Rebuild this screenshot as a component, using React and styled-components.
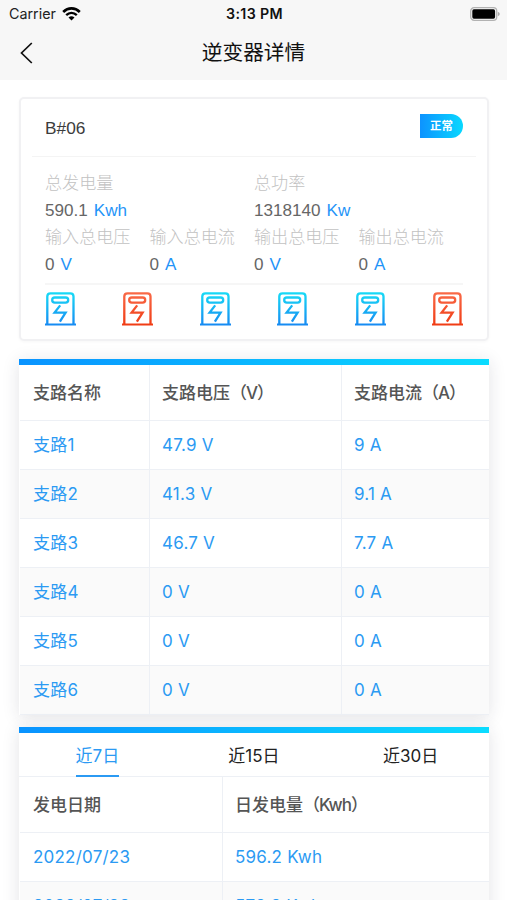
import React from "react";
import styled, { createGlobalStyle } from "styled-components";

const Global = createGlobalStyle`
  * { box-sizing: border-box; }
  body {
    margin: 0;
    background: #fff;
    font-family: Inter, "Noto Sans CJK SC", sans-serif;
    color: #111;
    overflow: hidden;
  }
`;

const Screen = styled.main`
  width: 507px;
  height: 900px;
  overflow: hidden;
  background: #fff;
`;

const Header = styled.header`
  height: 80px;
  background: #f7f7f7;
`;

const StatusBar = styled.div`
  height: 27px;
  padding: 0 7px 0 9px;
  display: grid;
  grid-template-columns: 1fr auto 1fr;
  align-items: center;
`;

const Carrier = styled.div`
  display: flex;
  align-items: center;
  gap: 6px;
  font-size: 14.3px;
  color: #222;
`;

const Clock = styled.div`
  font-size: 14.2px;
  font-weight: 600;
  letter-spacing: 0.35px;
`;

const BatterySlot = styled.div`
  display: flex;
  justify-content: flex-end;
`;

const NavBar = styled.div`
  height: 53px;
  padding: 0 20px 2px;
  display: grid;
  grid-template-columns: 1fr auto 1fr;
  align-items: center;
`;

const Title = styled.h1`
  margin: 0;
  font-size: 20.7px;
  line-height: 30px;
  font-weight: 400;
`;

const Content = styled.div`
  padding: 17px 17px 0 19px;
`;

const SummaryCard = styled.section`
  width: 470px;
  height: 244px;
  padding: 0 11px;
  border: 2px solid #f1f1f3;
  border-radius: 5px;
  background: #fff;
  box-shadow: 0 1px 3px rgba(40, 40, 60, 0.04);
  font-family: "Liberation Sans", "Noto Sans CJK SC", sans-serif;
`;

const SummaryHead = styled.div`
  height: 58px;
  padding: 2px 13px 0;
  display: flex;
  align-items: center;
  justify-content: space-between;
  border-bottom: 1px solid #f4f4f4;
  font-size: 17.3px;
  color: #3c3c3c;
`;

const Badge = styled.span`
  width: 43px;
  height: 24px;
  margin-bottom: 5px;
  padding-left: 10px;
  border-radius: 0 12px 12px 0;
  background: linear-gradient(90deg, #0d93ff, #08d8ff);
  color: #fff;
  font-size: 11.4px;
  font-weight: 700;
  line-height: 24px;
`;

const Metrics = styled.div`
  margin: 0 13px;
  padding-top: 13px;
  height: 128px;
  border-bottom: 2px solid #f6f6f6;
`;

const MetricRow = styled.div`
  display: grid;
  grid-template-columns: repeat(${(p) => p.$columns}, 1fr);
  height: 54px;
`;

const Metric = styled.div`
  font-size: 17.1px;
  line-height: 27px;
  color: #666;
  white-space: nowrap;
`;

const MetricLabel = styled.div`
  height: 27px;
  color: #c2c2c2;
  font-weight: 300;
`;

const Unit = styled.span`
  margin-left: 6px;
  color: #1f94f8;
`;

const IconRow = styled.div`
  margin: 7px 13px 0;
  display: flex;
  justify-content: space-between;
`;

const Panel = styled.section`
  width: 470px;
  margin-top: ${(p) => p.$top}px;
  background: #fff;
  box-shadow: 0 2px 16px rgba(40, 40, 60, 0.13);
`;

const Accent = styled.div`
  height: 6px;
  background: linear-gradient(90deg, #0993ff, #0bdcff);
`;

const Row = styled.div`
  display: grid;
  grid-template-columns: ${(p) => p.$columns};
  height: ${(p) => (p.$head ? 56 : 49)}px;
  line-height: ${(p) => (p.$head ? 57 : 48)}px;
  margin-left: 1px;
  background: ${(p) => (p.$striped ? "#fafafa" : "#fff")};
  border-bottom: 1px solid #edf0f5;
  color: ${(p) => (p.$head ? "#555" : "#2b9af3")};
  font-weight: ${(p) => (p.$head ? 500 : 400)};
  letter-spacing: ${(p) => (p.$head ? 0 : 0.22)}px;
`;

const Cell = styled.div`
  height: 100%;
  min-height: 0;
  padding-left: 13px;
  font-size: 17px;
  white-space: pre;
  & + & {
    padding-left: 12px;
    border-left: 1px solid #edf0f5;
  }
`;

const HeadUnit = styled.span`
  letter-spacing: -1px;
`;

const Tabs = styled.div`
  height: 44px;
  border-bottom: 1px solid #edf0f5;
  display: grid;
  grid-template-columns: repeat(3, 1fr);
  justify-items: center;
`;

const Tab = styled.button`
  appearance: none;
  height: 44px;
  padding: 3px 0 0;
  border: 0;
  border-bottom: 2px solid ${(p) => (p.$active ? "#2b9af3" : "transparent")};
  background: none;
  color: ${(p) => (p.$active ? "#2b9af3" : "#222")};
  font: 400 17px/41px Inter, "Noto Sans CJK SC", sans-serif;
`;

function Wifi() {
  return (
    <svg width="19" height="14" viewBox="0 0 19 14" fill="none" stroke="#000">
      <path d="M1.2 5C6 .2 13 .2 17.8 5" strokeWidth="2.6" />
      <path d="M4.2 8.1c3.1-2.9 7.5-2.9 10.6 0" strokeWidth="2.4" />
      <path d="M9.5 13.6 6.5 10.5q3-2.3 6 0Z" fill="#000" stroke="none" />
    </svg>
  );
}

function Battery() {
  return (
    <svg width="30" height="14" viewBox="0 0 30 14">
      <rect x="0.7" y="0.7" width="26" height="12.6" rx="3.4" fill="#f7f7f7" stroke="#b2b2b2" strokeWidth="1.3" />
      <rect x="2.3" y="2.3" width="22.8" height="9.4" rx="1.6" fill="#000" />
      <path d="M27.8 4.7q2 .9 2 2.3t-2 2.3Z" fill="#aaa" />
    </svg>
  );
}

function Back() {
  return (
    <svg width="13" height="22" viewBox="0 0 13 22" fill="none" stroke="#111" strokeWidth="1.7">
      <path d="M11.8 1 1.5 11l10.3 10" />
    </svg>
  );
}

function Inverter({ id, alert }) {
  const paint = `url(#${id})`;
  return (
    <svg width="31" height="34" viewBox="0 0 31 34" fill="none" stroke={paint} strokeWidth="2.3">
      <defs>
        <linearGradient id={id} gradientUnits="userSpaceOnUse" x1="0" y1="0" x2="0" y2="34">
          <stop offset="0" stopColor={alert ? "#f96a48" : "#18dcf6"} />
          <stop offset="1" stopColor={alert ? "#f03a12" : "#1688f2"} />
        </linearGradient>
      </defs>
      <path d="M2.3 32V4.5Q2.3 1.3 5.5 1.3h19.8q3.2 0 3.2 3.2V32" />
      <path d="M0.2 32.4h30.6V32.5H.2Z" strokeWidth="2" />
      <rect x="7.2" y="5.5" width="16" height="5.2" rx="2.6" />
      <path d="M15.2 13.4 9.6 20.6h11L14.9 29.6" />
    </svg>
  );
}

const totals = [
  ["总发电量", "590.1", "Kwh"],
  ["总功率", "1318140", "Kw"],
];
const readings = [
  ["输入总电压", "0", "V"],
  ["输入总电流", "0", "A"],
  ["输出总电压", "0", "V"],
  ["输出总电流", "0", "A"],
];
const alerts = [false, true, false, false, false, true];
const branchHead = [{ name: "支路名称" }, { name: "支路电压", unit: "（V）" }, { name: "支路电流", unit: "（A）" }];
const branches = [
  ["支路1", "47.9 V", "9 A"],
  ["支路2", "41.3 V", "9.1 A"],
  ["支路3", "46.7 V", "7.7 A"],
  ["支路4", "0 V", "0 A"],
  ["支路5", "0 V", "0 A"],
  ["支路6", "0 V", "0 A"],
];
const dayHead = [{ name: "发电日期" }, { name: "日发电量", unit: "（Kwh）" }];
const days = [
  ["2022/07/23", "596.2 Kwh"],
  ["2022/07/22", "578.2 Kwh"],
];
const branchColumns = "129px 192px 1fr";
const dayColumns = "202px 1fr";

function MetricGroup({ items }) {
  return (
    <MetricRow $columns={items.length}>
      {items.map(([label, value, unit]) => (
        <Metric key={label}>
          <MetricLabel>{label}</MetricLabel>
          {value}
          <Unit>{unit}</Unit>
        </Metric>
      ))}
    </MetricRow>
  );
}

function Table({ columns, head, rows }) {
  return (
    <>
      <Row $head $columns={columns}>
        {head.map(({ name, unit }) => (
          <Cell key={name}>
            {name}
            {unit && <HeadUnit>{unit}</HeadUnit>}
          </Cell>
        ))}
      </Row>
      {rows.map((row, i) => (
        <Row key={row[0]} $columns={columns} $striped={i % 2 === 1}>
          {row.map((text, j) => <Cell key={j}>{text}</Cell>)}
        </Row>
      ))}
    </>
  );
}

export default function App() {
  return (
    <Screen>
      <Global />
      <Header>
        <StatusBar>
          <Carrier>Carrier <Wifi /></Carrier>
          <Clock>3:13 PM</Clock>
          <BatterySlot><Battery /></BatterySlot>
        </StatusBar>
        <NavBar>
          <Back />
          <Title>逆变器详情</Title>
        </NavBar>
      </Header>
      <Content>
        <SummaryCard>
          <SummaryHead>B#06<Badge>正常</Badge></SummaryHead>
          <Metrics>
            <MetricGroup items={totals} />
            <MetricGroup items={readings} />
          </Metrics>
          <IconRow>
            {alerts.map((alert, i) => <Inverter key={i} id={`inverter-${i}`} alert={alert} />)}
          </IconRow>
        </SummaryCard>
        <Panel $top={18}>
          <Accent />
          <Table columns={branchColumns} head={branchHead} rows={branches} />
        </Panel>
        <Panel $top={12}>
          <Accent />
          <Tabs>
            <Tab $active>近7日</Tab>
            <Tab>近15日</Tab>
            <Tab>近30日</Tab>
          </Tabs>
          <Table columns={dayColumns} head={dayHead} rows={days} />
        </Panel>
      </Content>
    </Screen>
  );
}
